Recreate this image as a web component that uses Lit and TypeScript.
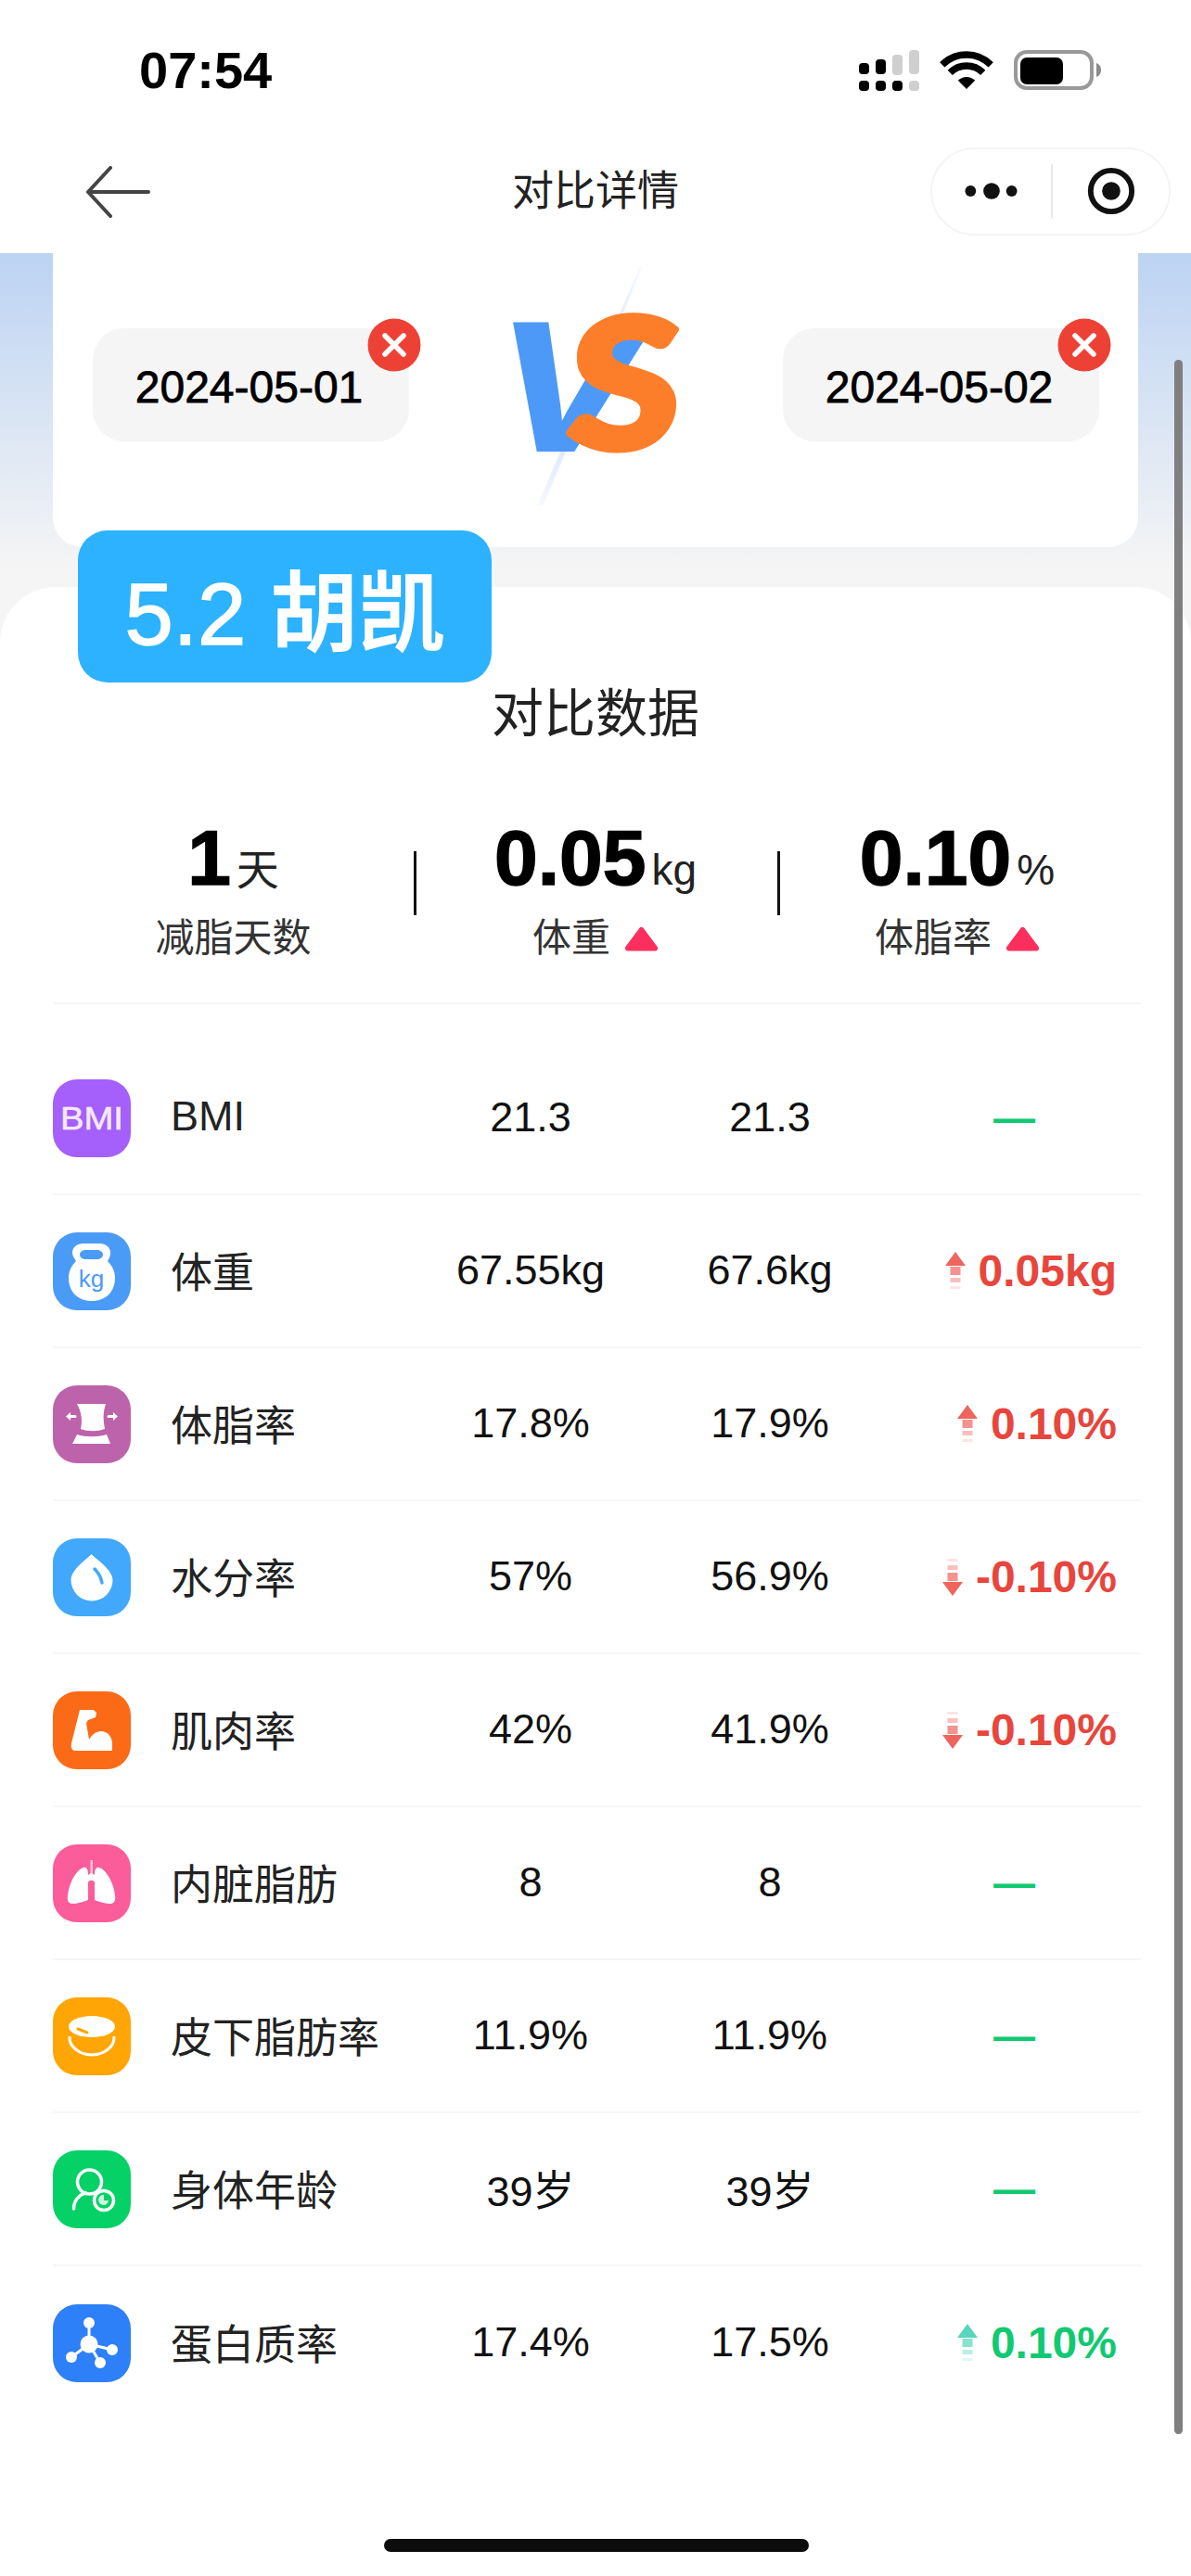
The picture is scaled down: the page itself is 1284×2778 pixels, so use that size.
import { LitElement, html, css, svg } from "lit";
import { customElement } from "lit/decorators.js";

type Row = { key: string; name: string; a: string; b: string; diff?: string; dir?: "up" | "down"; tone?: "red" | "green" };

const ROWS: Row[] = [
  { key: "bmi", name: "BMI", a: "21.3", b: "21.3" },
  { key: "kg", name: "体重", a: "67.55kg", b: "67.6kg", diff: "0.05kg", dir: "up", tone: "red" },
  { key: "waist", name: "体脂率", a: "17.8%", b: "17.9%", diff: "0.10%", dir: "up", tone: "red" },
  { key: "drop", name: "水分率", a: "57%", b: "56.9%", diff: "-0.10%", dir: "down", tone: "red" },
  { key: "muscle", name: "肌肉率", a: "42%", b: "41.9%", diff: "-0.10%", dir: "down", tone: "red" },
  { key: "lungs", name: "内脏脂肪", a: "8", b: "8" },
  { key: "fat", name: "皮下脂肪率", a: "11.9%", b: "11.9%" },
  { key: "age", name: "身体年龄", a: "39岁", b: "39岁" },
  { key: "mol", name: "蛋白质率", a: "17.4%", b: "17.5%", diff: "0.10%", dir: "up", tone: "green" },
];

const ICONS: Record<string, { bg: string; body: unknown }> = {
  bmi: {
    bg: "#a55ffb",
    body: svg`<text x="42" y="54" text-anchor="middle" font-family="Liberation Sans, sans-serif" font-size="35" fill="#f4e9ff" stroke="#f4e9ff" stroke-width=".6" textLength="68" lengthAdjust="spacingAndGlyphs">BMI</text>`,
  },
  kg: {
    bg: "#4a9bf5",
    body: svg`
      <path fill="#fff" fill-rule="evenodd" d="M33 12h17c7 0 12 4 12 10 0 3-1 6-3 9 5 5 8 11 8 18 0 15-10 25-25 25S17 64 17 49c0-7 3-13 8-18-2-3-4-6-4-9 0-6 5-10 12-10zM36 19c-4 0-7 2-7 5s3 5 7 5h11c4 0 7-2 7-5s-3-5-7-5z"/>
      <text x="41.500" y="59" text-anchor="middle" font-family="Liberation Sans, sans-serif" font-size="26" fill="#4a9bf5">kg</text>`,
  },
  waist: {
    bg: "#bd63ab",
    body: svg`
      <path fill="#fff" d="M26 20h31c-3 9-3 18-1 27-9 3-17 3-26 0 2-9 1-18-4-27z"/>
      <path fill="#fff" d="M26 53c10 3 22 3 32 0l4 10H21z"/>
      <path fill="#fff" d="M14 33.500l5-4.500v3h5a1.500 1.500 0 0 1 0 3h-5v3zM70 33.500l-5-4.500v3h-5a1.500 1.500 0 0 0 0 3h5v3z"/>`,
  },
  drop: {
    bg: "#42a8fb",
    body: svg`
      <path fill="#fff" d="M41.500 17c3 4 23 16 23 28a22.500 22.500 0 0 1-45 0c0-12 19-24 22-28z"/>
      <path fill="none" stroke="#42a8fb" stroke-width="3.500" stroke-linecap="round" d="M45 33c4 4 7 9 8 15"/>`,
  },
  muscle: {
    bg: "#fb6a17",
    body: svg`<path fill="#fff" d="M29 20h15l3 3-1 5-8 3-2 3 3 18c3-5 7-9 13-9 7 0 11 5 12 12v9H24c-3 0-5-3-4-8z"/>`,
  },
  lungs: {
    bg: "#fb5c9a",
    body: svg`
      <rect x="40.500" y="17" width="2.500" height="18" fill="#ffc6dc"/>
      <path fill="#fff" d="M33 25C37 24 38 28 38 33V60C33 62 26 64 21 64C17 64 15 60 16 55C17 44 24 28 33 25Z"/>
      <path fill="#fff" d="M50 25C46 24 45 28 45 33V60C50 62 57 64 62 64C66 64 68 60 67 55C66 44 59 28 50 25Z"/>
      <path fill="#fff" d="M38 33L41 31H42L45 33V41C44 38 39 38 38 41Z"/>`,
  },
  fat: {
    bg: "#ffa505",
    body: svg`
      <path fill="none" stroke="#fff" stroke-width="3" d="M18 42c-1 12 12 20 24 20s25-8 24-20"/>
      <ellipse cx="42" cy="31.500" rx="25" ry="11.500" fill="#fff"/>
      <path stroke="#ffa505" stroke-width="3" stroke-linecap="round" d="M27 34l10 4"/>`,
  },
  age: {
    bg: "#05d166",
    body: svg`
      <g fill="none" stroke="#fff" stroke-width="3.500" stroke-linecap="round">
        <circle cx="39.500" cy="34" r="13"/>
        <path d="M22.500 63c0-8 5-15 13-17"/>
        <circle cx="55" cy="54" r="10.500"/>
      </g>
      <path fill="#fff" d="M55 48v6h5a5.500 5.500 0 1 1-5-6z" opacity=".8"/>`,
  },
  mol: {
    bg: "#2e80f8",
    body: svg`
      <g fill="none" stroke="#fff" stroke-width="3">
        <path d="M39 20V43L64 49M39 43L20 57M39 43L51 63"/>
      </g>
      <g fill="#fff">
        <circle cx="39" cy="43" r="9.500"/><circle cx="39" cy="20" r="6"/><circle cx="64" cy="49" r="6"/><circle cx="20" cy="57" r="6"/><circle cx="51" cy="63" r="6"/>
      </g>`,
  },
};

@customElement("app-root")
export class AppRoot extends LitElement {
  static styles = css`
    :host { display: block; position: relative; width: 1284px; height: 2778px; overflow: hidden; background: #fff;
      font-family: "Liberation Sans", "Noto Sans CJK SC", sans-serif; color: #111; }
    * { box-sizing: border-box; }
    .status { height: 152px; display: flex; align-items: center; justify-content: space-between; padding: 0 96px 0 150px; background: #fff; }
    .time { font-size: 56px; font-weight: 700; line-height: 60px; color: #000; }
    .sys { display: flex; align-items: center; gap: 22px; }
    .sys svg { display: block; }
    .nav { height: 121px; padding: 7px 22px 19px; background: #fff; display: grid; grid-template-columns: 1fr auto 1fr; align-items: center; }
    .back { margin-left: 70px; display: block; }
    .nav-title { font-size: 45px; color: #222; line-height: 60px; }
    .capsule { justify-self: end; width: 259px; height: 95px; border: 2px solid #f4f4f4; border-radius: 48px; display: flex; align-items: center; justify-content: center; background: #fff; }
    .main { height: 2505px; background: linear-gradient(180deg, #bcd3f3 0, #f5f5f5 340px); padding-top: 0; }
    .card { margin: 0 57px; height: 317px; background: #fff; border-radius: 0 0 32px 32px; padding: 7px 42px 0 43px; display: flex; justify-content: space-between; align-items: flex-start; }
    .pill { position: relative; width: 341px; height: 122px; margin-top: 74px; padding: 5px 4px 0 0; background: #f5f5f5; border-radius: 34px; display: flex; align-items: center; justify-content: center; font-size: 48px; -webkit-text-stroke: 0.8px #000; color: #000; }
    .close { position: absolute; right: -13px; top: -11px; display: block; }
    .vs { display: block; }
    .panel { margin-top: 43px; height: 2145px; background: #fff; border-radius: 60px 60px 0 0; padding-top: 107px; }
    .title { text-align: center; font-size: 56px; line-height: 60px; color: #222; }
    .stats { margin: 84px 54px 0 57px; padding-bottom: 41px; border-bottom: 2px solid #f5f5f5; display: grid; grid-template-columns: 389px 3px 389px 3px 1fr; }
    .stat { display: flex; flex-direction: column; align-items: center; }
    .stat:nth-child(3) { padding-right: 3px; }
    .stat:last-child { padding-right: 7px; }
    .value { display: flex; align-items: baseline; line-height: 82px; height: 82px; }
    .big { font-size: 84px; font-weight: 700; color: #000; -webkit-text-stroke: 1.5px #000; }
    .unit { font-size: 46px; margin-left: 6px; color: #222; }
    .label { margin-top: 18px; display: flex; align-items: center; gap: 15px; font-size: 42px; line-height: 56px; color: #333; }
    .label svg { display: block; }
    .divider { width: 3px; height: 69px; margin-top: 34px; background: #111; }
    .rows { margin: 41px 54px 0 57px; }
    .row { height: 165px; border-bottom: 2px solid #f6f6f6; display: grid; grid-template-columns: 386px 258px 258px 1fr; align-items: center; font-size: 45px; color: #111; }
    .row:last-child { border-bottom: 0; }
    .name { display: flex; align-items: center; gap: 43px; color: #222; }
    .name span { margin-bottom: 3px; }
    .name svg { display: block; flex: none; }
    .val { text-align: center; margin-bottom: 2px; }
    .diff { display: flex; align-items: center; justify-content: flex-end; gap: 14px; padding-right: 26px; font-size: 48px; font-weight: 700; }
    .diff svg { display: block; }
    .diff.red { color: #e8453c; }
    .diff.green { color: #10c971; }
    .diff.dash { padding-right: 114px; color: #10c971; font-size: 45px; }
    .flip { transform: scaleY(-1); }
    .tag { position: absolute; left: 84px; top: 572px; width: 446px; height: 164px; border-radius: 32px; background: #2db2ff; color: #fff; display: flex; align-items: center; justify-content: center; font-size: 94px; font-weight: 500; white-space: pre; -webkit-text-stroke: 1.5px #fff; }
    .scrollbar { position: absolute; left: 1266px; top: 388px; width: 9px; height: 2237px; border-radius: 5px; background: #7f7f7f; }
    .home { position: absolute; left: 414px; top: 2738px; width: 458px; height: 14px; border-radius: 7px; background: #0c0c0c; }
  `;

  private signal() {
    const dark = "#000", grey = "#cfcfcf";
    return html`<svg width="65" height="45" viewBox="0 0 65 45">
      <rect x="0" y="14" width="11" height="12" rx="4" fill=${dark}/><rect x="0" y="33" width="11" height="11" rx="4" fill=${dark}/>
      <rect x="18" y="10" width="11" height="16" rx="4" fill=${dark}/><rect x="18" y="33" width="11" height="11" rx="4" fill=${dark}/>
      <rect x="36" y="5" width="11" height="22" rx="4" fill=${grey}/><rect x="36" y="33" width="11" height="11" rx="4" fill=${dark}/>
      <rect x="54" y="0" width="11" height="26" rx="4" fill=${grey}/><rect x="54" y="33" width="11" height="11" rx="4" fill=${grey}/>
    </svg>`;
  }

  private wifi() {
    return html`<svg width="58" height="42" viewBox="0 0 58 42">
      <g fill="none" stroke="#000" stroke-width="7.500">
        <path d="M2.800 14.800A37 37 0 0 1 55.200 14.800"/>
        <path d="M11.300 23.300A25 25 0 0 1 46.700 23.300"/>
      </g>
      <path d="M29 41L19.800 31.800A13 13 0 0 1 38.200 31.800Z" fill="#000"/>
    </svg>`;
  }

  private battery() {
    return html`<svg width="95" height="44" viewBox="0 0 95 44">
      <rect x="2" y="2" width="82" height="39" rx="12" fill="none" stroke="#999" stroke-width="4"/>
      <rect x="7" y="8" width="46" height="29" rx="7" fill="#000"/>
      <path d="M89 14c3 1 5 4 5 7.500s-2 6.500-5 7.500z" fill="#8a8a8a"/>
    </svg>`;
  }

  private closeIcon() {
    return html`<svg class="close" width="58" height="58" viewBox="0 0 58 58">
      <circle cx="29" cy="29" r="28.500" fill="#ee4136"/>
      <path d="M19 19l20 20M39 19L19 39" stroke="#fff" stroke-width="5.500" stroke-linecap="round"/>
    </svg>`;
  }

  private triangle() {
    return html`<svg width="37" height="27" viewBox="0 0 37 27">
      <path d="M18.500 4L33 23.500H4z" fill="#fb2f5e" stroke="#fb2f5e" stroke-width="6" stroke-linejoin="round"/>
    </svg>`;
  }

  private arrow(dir: string, tone: string) {
    const c = tone === "green" ? "#3ccfb2" : "#ec4a42";
    return html`<svg class=${dir === "down" ? "flip" : ""} width="22" height="41" viewBox="0 0 22 41">
      <path d="M11 0L22 15H0z" fill=${c} opacity=".85"/>
      <rect x="5.500" y="16" width="11" height="9" fill=${c} opacity=".6"/>
      <rect x="5.500" y="28" width="11" height="5" fill=${c} opacity=".35"/>
      <rect x="5.500" y="37" width="11" height="3" fill=${c} opacity=".15"/>
    </svg>`;
  }

  private icon(key: string) {
    const i = ICONS[key];
    return html`<svg width="84" height="84" viewBox="0 0 84 84">
      <rect width="84" height="84" rx="26" fill=${i.bg}/>${i.body}
    </svg>`;
  }

  private vs() {
    return html`<svg class="vs" width="280" height="280" viewBox="0 0 280 280">
      <defs><linearGradient id="sl" x1="0" y1="0" x2="0" y2="1">
        <stop offset="0" stop-color="#e2eafb" stop-opacity=".2"/><stop offset=".3" stop-color="#dfe8fb"/>
        <stop offset=".7" stop-color="#dfe8fb"/><stop offset="1" stop-color="#e2eafb" stop-opacity=".2"/>
      </linearGradient></defs>
      <path d="M188 8L78 264L82 264L188 8Z" fill="url(#sl)" stroke="url(#sl)" stroke-width="3"/>
      <text x="34" y="205" font-family="Liberation Sans, sans-serif" font-weight="700" font-style="italic" font-size="196" fill="#4d99f7" stroke="#4d99f7" stroke-width="4" textLength="150" lengthAdjust="spacingAndGlyphs">V</text>
      <text x="119" y="204" transform="skewX(-4)" font-family="Lato, sans-serif" font-weight="900" font-size="196" fill="#fd7e2a" stroke="#fd7e2a" stroke-width="6" stroke-linejoin="round" textLength="122" lengthAdjust="spacingAndGlyphs">S</text>
    </svg>`;
  }

  render() {
    return html`
      <div class="status">
        <div class="time">07:54</div>
        <div class="sys">${this.signal()}${this.wifi()}${this.battery()}</div>
      </div>
      <div class="nav">
        <svg class="back" width="70" height="56" viewBox="0 0 70 56">
          <path d="M27 2L3 28L27 54M3 28H68" fill="none" stroke="#444" stroke-width="4" stroke-linecap="round" stroke-linejoin="round"/>
        </svg>
        <div class="nav-title">对比详情</div>
        <div class="capsule">
          <svg width="259" height="95" viewBox="0 0 259 95">
            <circle cx="42" cy="47" r="6" fill="#111"/><circle cx="65" cy="47" r="9" fill="#111"/><circle cx="87" cy="47" r="6" fill="#111"/>
            <rect x="130" y="18" width="2" height="59" fill="#e8e8e8"/>
            <circle cx="196" cy="47" r="22.500" fill="none" stroke="#111" stroke-width="6"/><circle cx="196" cy="47" r="10" fill="#111"/>
          </svg>
        </div>
      </div>
      <div class="main">
        <div class="card">
          <div class="pill">2024-05-01${this.closeIcon()}</div>
          ${this.vs()}
          <div class="pill">2024-05-02${this.closeIcon()}</div>
        </div>
        <div class="panel">
          <div class="title">对比数据</div>
          <div class="stats">
            <div class="stat">
              <div class="value"><span class="big">1</span><span class="unit">天</span></div>
              <div class="label">减脂天数</div>
            </div>
            <div class="divider"></div>
            <div class="stat">
              <div class="value"><span class="big">0.05</span><span class="unit">kg</span></div>
              <div class="label">体重${this.triangle()}</div>
            </div>
            <div class="divider"></div>
            <div class="stat">
              <div class="value"><span class="big">0.10</span><span class="unit">%</span></div>
              <div class="label">体脂率${this.triangle()}</div>
            </div>
          </div>
          <div class="rows">
            ${ROWS.map(
              (r) => html`<div class="row">
                <div class="name">${this.icon(r.key)}<span>${r.name}</span></div>
                <div class="val">${r.a}</div>
                <div class="val">${r.b}</div>
                ${r.diff
                  ? html`<div class="diff ${r.tone}">${this.arrow(r.dir!, r.tone!)}<span>${r.diff}</span></div>`
                  : html`<div class="diff dash">—</div>`}
              </div>`
            )}
          </div>
        </div>
      </div>
      <div class="tag">5.2 胡凯</div>
      <div class="scrollbar"></div>
      <div class="home"></div>
    `;
  }
}
